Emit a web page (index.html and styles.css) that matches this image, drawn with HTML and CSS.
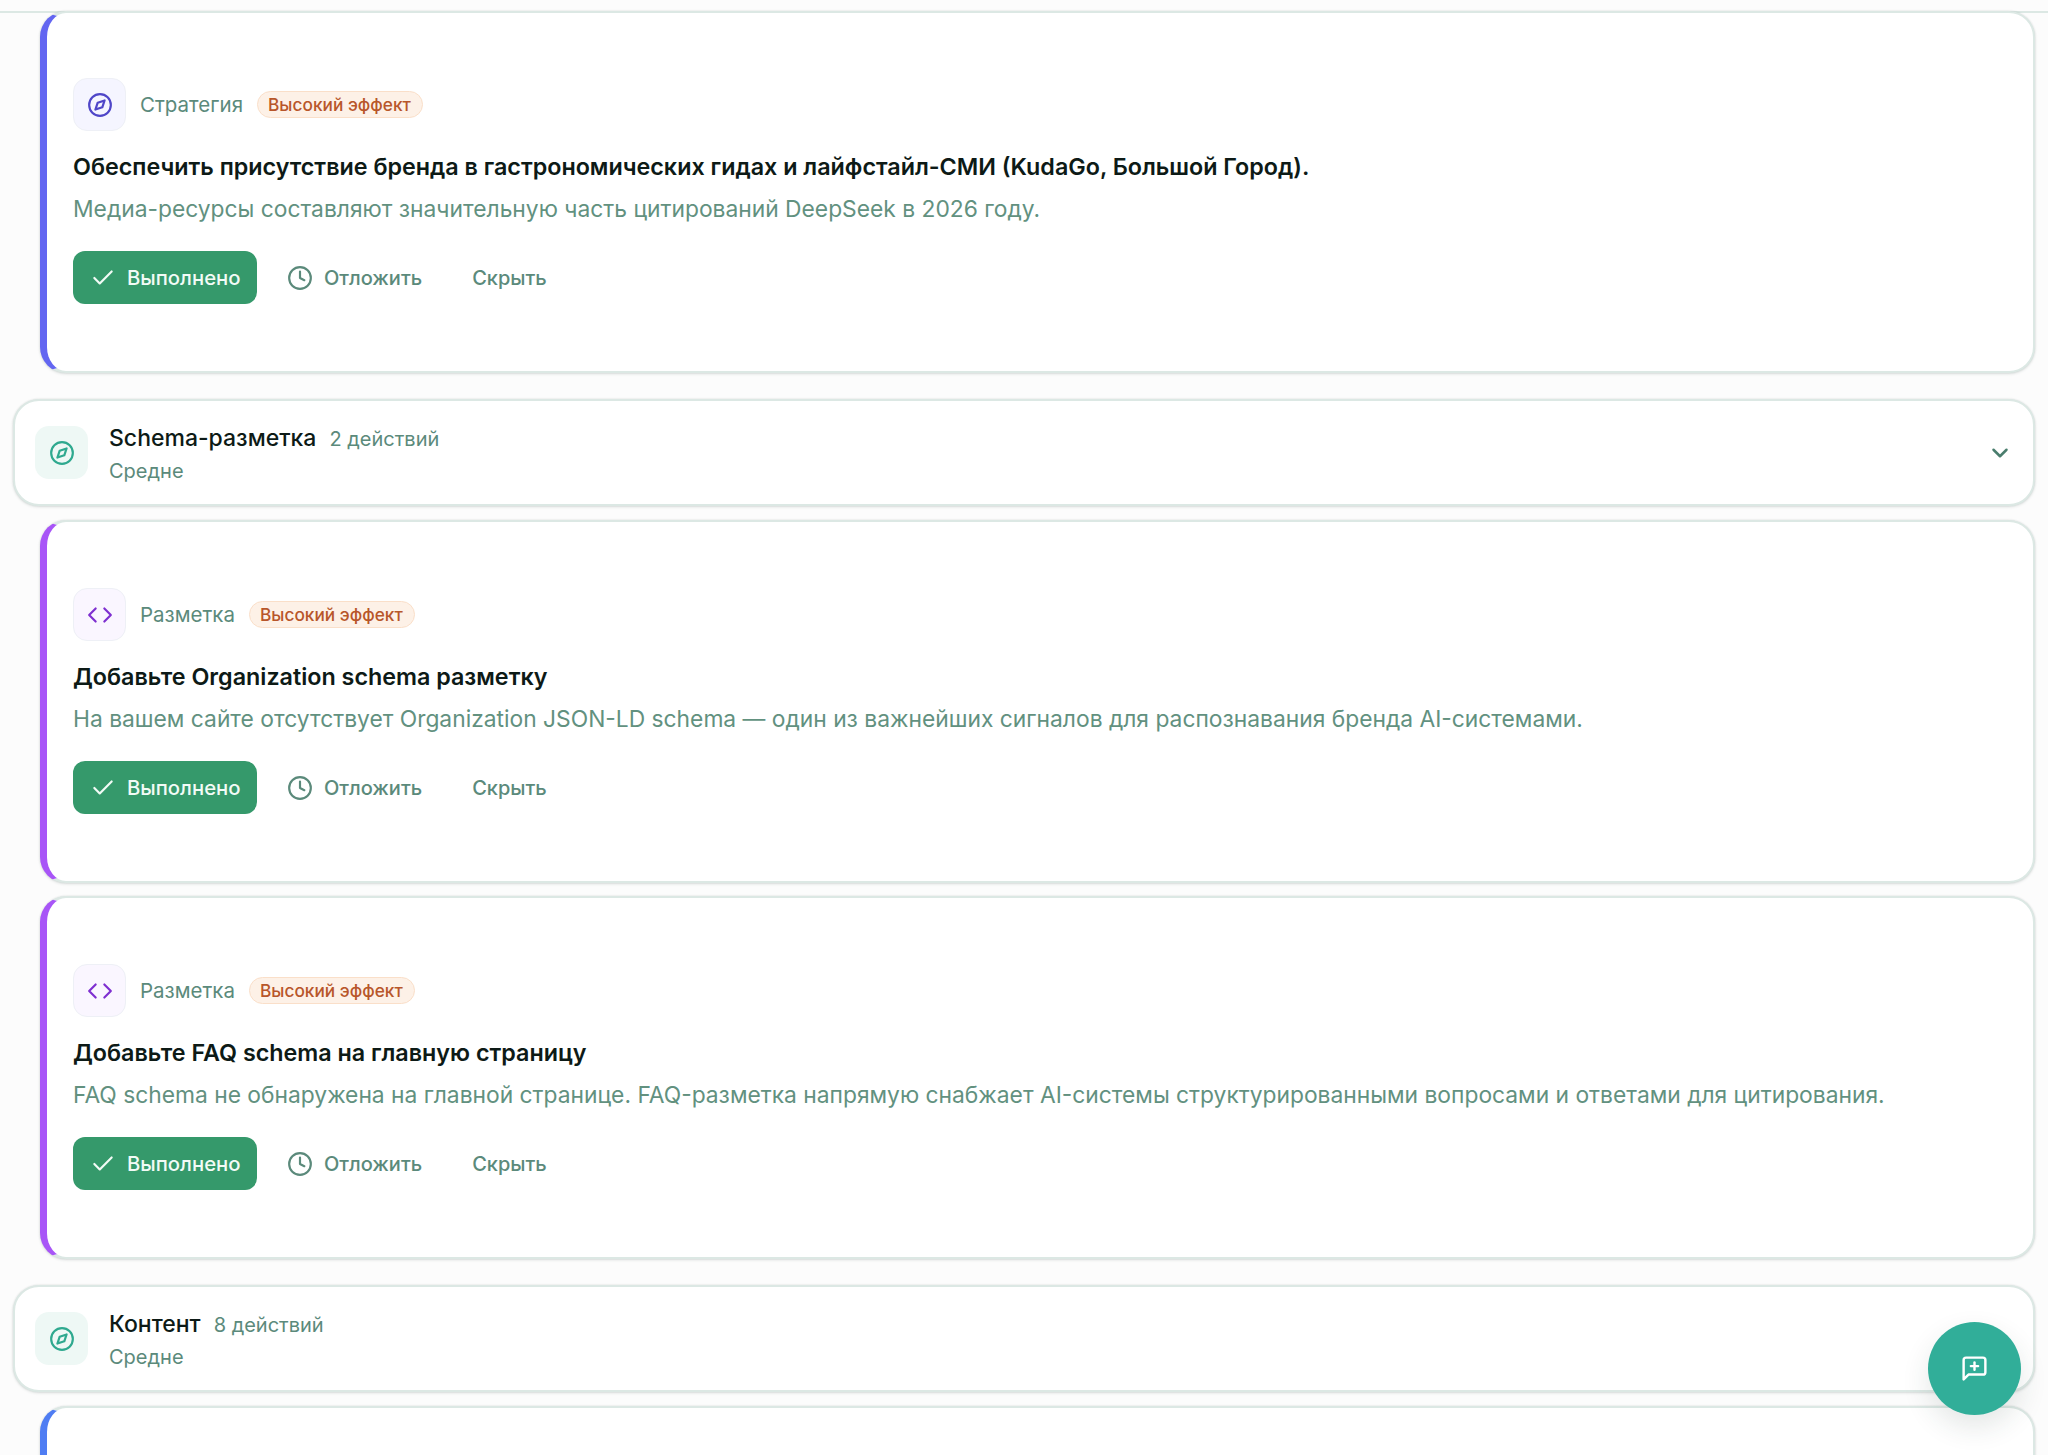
FILE: index.html
```html
<!DOCTYPE html>
<html lang="ru">
<head>
    <meta charset="UTF-8">
    <title>Рекомендации</title>
    <link rel="stylesheet" href="styles.css">
</head>
<body>
    <svg class="sprite" width="0" height="0">
        <symbol id="i-compass" viewBox="0 0 24 24"><circle cx="12" cy="12" r="10"/><path d="m16.24 7.76-2.12 6.36-6.36 2.12 2.12-6.36 6.36-2.12z"/></symbol>
        <symbol id="i-code" viewBox="0 0 24 24"><path d="m8 6-6 6 6 6"/><path d="m16 6 6 6-6 6"/></symbol>
        <symbol id="i-check" viewBox="0 0 24 24"><path d="M20 6 9 17l-5-5"/></symbol>
        <symbol id="i-clock" viewBox="0 0 24 24"><circle cx="12" cy="12" r="10"/><path d="M12 6v6l4 2"/></symbol>
    </svg>

    <div class="topbar"></div>

    <div class="list">
        <div class="card card-strategy">
            <div class="card-head">
                <div class="card-icon icon-strategy"><svg><use href="#i-compass"/></svg></div>
                <span class="card-cat">Стратегия</span>
                <span class="badge">Высокий эффект</span>
            </div>
            <h3 class="card-title">Обеспечить присутствие бренда в гастрономических гидах и лайфстайл-СМИ (KudaGo, Большой Город).</h3>
            <p class="card-desc">Медиа-ресурсы составляют значительную часть цитирований DeepSeek в 2026 году.</p>
            <div class="actions">
                <button class="btn-done"><svg><use href="#i-check"/></svg>Выполнено</button>
                <button class="btn-later"><svg><use href="#i-clock"/></svg>Отложить</button>
                <button class="btn-hide">Скрыть</button>
            </div>
        </div>

        <div class="group">
            <div class="group-icon"><svg><use href="#i-compass"/></svg></div>
            <div class="group-text">
                <div class="group-line"><span class="group-name">Schema-разметка</span><span class="group-count">2 действий</span></div>
                <div class="group-level">Средне</div>
            </div>
            <svg class="chevron" viewBox="0 0 24 24"><path d="m6 9 6 6 6-6"/></svg>
        </div>

        <div class="card card-markup">
            <div class="card-head">
                <div class="card-icon icon-markup"><svg><use href="#i-code"/></svg></div>
                <span class="card-cat">Разметка</span>
                <span class="badge">Высокий эффект</span>
            </div>
            <h3 class="card-title">Добавьте Organization schema разметку</h3>
            <p class="card-desc">На вашем сайте отсутствует Organization JSON-LD schema — один из важнейших сигналов для распознавания бренда AI-системами.</p>
            <div class="actions">
                <button class="btn-done"><svg><use href="#i-check"/></svg>Выполнено</button>
                <button class="btn-later"><svg><use href="#i-clock"/></svg>Отложить</button>
                <button class="btn-hide">Скрыть</button>
            </div>
        </div>

        <div class="card card-markup">
            <div class="card-head">
                <div class="card-icon icon-markup"><svg><use href="#i-code"/></svg></div>
                <span class="card-cat">Разметка</span>
                <span class="badge">Высокий эффект</span>
            </div>
            <h3 class="card-title">Добавьте FAQ schema на главную страницу</h3>
            <p class="card-desc">FAQ schema не обнаружена на главной странице. FAQ-разметка напрямую снабжает AI-системы структурированными вопросами и ответами для цитирования.</p>
            <div class="actions">
                <button class="btn-done"><svg><use href="#i-check"/></svg>Выполнено</button>
                <button class="btn-later"><svg><use href="#i-clock"/></svg>Отложить</button>
                <button class="btn-hide">Скрыть</button>
            </div>
        </div>

        <div class="group group-last">
            <div class="group-icon"><svg><use href="#i-compass"/></svg></div>
            <div class="group-text">
                <div class="group-line"><span class="group-name">Контент</span><span class="group-count">8 действий</span></div>
                <div class="group-level">Средне</div>
            </div>
        </div>

        <div class="card card-content"></div>
    </div>

    <button class="fab">
        <svg viewBox="0 0 24 24"><path d="M21 15a2 2 0 0 1-2 2H7l-4 4V5a2 2 0 0 1 2-2h14a2 2 0 0 1 2 2z"/><path d="M12 7v6"/><path d="M9 10h6"/></svg>
    </button>
</body>
</html>
```

FILE: styles.css
```css
* {
    margin: 0;
    padding: 0;
    box-sizing: border-box;
}

html, body {
    height: 100%;
    overflow: hidden;
}

body {
    font-family: 'Inter', 'Noto Sans', sans-serif;
    background: #fcfcfc;
    color: #10201b;
}

svg {
    fill: none;
    stroke: currentColor;
    stroke-width: 2;
    stroke-linecap: round;
    stroke-linejoin: round;
}

.sprite {
    display: block;
}

.topbar {
    height: 13px;
    background: #fcfcfc;
    border-bottom: 2px solid #dce8e4;
}

.list {
    margin-top: -2px;
    padding: 0 13px;
}

/* карточка действия */
.card {
    margin-left: 27px;
    height: 363px;
    padding: 66px 32px 0 26px;
    background: #fff;
    border: 2px solid #dce8e4;
    border-left: 7px solid #6366f1;
    border-radius: 26px;
    box-shadow: 0 0 2px rgba(30, 60, 50, 0.12), 0 1px 3px rgba(30, 60, 50, 0.14);
}

.card-strategy {
    height: 362px;
    padding-top: 65px;
    border-left-color: #6366f1;
}

.card + .card {
    margin-top: 13px;
}

.card-markup {
    border-left-color: #a855f7;
}

.card-content {
    border-left-color: #4f7df3;
}

.card-head {
    display: flex;
    align-items: center;
}

.card-icon {
    width: 53px;
    height: 53px;
    border-radius: 14px;
    display: flex;
    align-items: center;
    justify-content: center;
    border: 1px solid #eef0f6;
}

.card-icon svg {
    width: 26px;
    height: 26px;
}

.icon-strategy {
    background: #f5f5ff;
    color: #4f46c8;
}

.icon-markup {
    background: #faf6ff;
    color: #7e2fd0;
}

.card-cat {
    margin-left: 14px;
    font-size: 20.5px;
    color: #5b8a7b;
}

.badge {
    margin-left: 14px;
    padding: 2.5px 11px 2.5px 10px;
    font-size: 17.3px;
    line-height: 20px;
    font-weight: 500;
    color: #b8562a;
    background: #fdf1e7;
    border: 1.5px solid #fadfc9;
    border-radius: 14px;
}

.card-title {
    margin-top: 21px;
    font-size: 23.3px;
    line-height: 30px;
    font-weight: 600;
    color: #0d1a16;
}

.card-desc {
    margin-top: 12px;
    font-size: 22.8px;
    line-height: 30px;
    color: #62917f;
}

.actions {
    margin-top: 27px;
    display: flex;
    align-items: center;
}

.actions button {
    font-family: inherit;
    font-size: 20px;
    font-weight: 500;
    border: none;
    background: none;
    display: flex;
    align-items: center;
}

.actions .btn-done {
    width: 184px;
    height: 53px;
    padding-left: 17px;
    font-size: 20.3px;
    color: #f2fbf6;
    background: #35996b;
    border-radius: 12px;
}

.btn-done svg {
    width: 26px;
    height: 26px;
    margin-right: 11px;
}

.btn-later {
    margin-left: 30px;
    color: #5b8a7b;
}

.btn-later svg {
    width: 26px;
    height: 26px;
    margin-right: 11px;
}

.btn-hide {
    margin-left: 50px;
    color: #5b8a7b;
}

/* заголовок группы */
.group {
    margin-top: 26px;
    margin-bottom: 14px;
    height: 107px;
    padding: 0 20px;
    display: flex;
    align-items: center;
    background: #fff;
    border: 2px solid #dce8e4;
    border-radius: 26px;
    box-shadow: 0 0 2px rgba(30, 60, 50, 0.12), 0 1px 3px rgba(30, 60, 50, 0.14);
}

.group-icon {
    width: 53px;
    height: 53px;
    border-radius: 14px;
    display: flex;
    align-items: center;
    justify-content: center;
    background: #eef8f5;
    color: #2fa98f;
}

.group-icon svg {
    width: 26px;
    height: 26px;
}

.group-text {
    margin-left: 21px;
    padding-top: 2px;
    flex: 1;
}

.group-line {
    display: flex;
    align-items: baseline;
}

.group-name {
    font-size: 23px;
    font-weight: 500;
    color: #0d1a16;
}

.group-count {
    margin-left: 13px;
    font-size: 20px;
    color: #5b8a7b;
}

.group-level {
    margin-top: 7px;
    font-size: 20px;
    color: #5b8a7b;
}

.chevron {
    width: 26px;
    height: 26px;
    stroke-width: 2.3;
    color: #4a7d6d;
}

.fab {
    position: fixed;
    left: 1928px;
    top: 1322px;
    width: 93px;
    height: 93px;
    border: none;
    border-radius: 50%;
    background: #31ae99;
    color: #fff;
    display: flex;
    align-items: center;
    justify-content: center;
    box-shadow: 0 12px 28px rgba(30, 60, 50, 0.12);
}

.fab svg {
    width: 29px;
    height: 29px;
}
```
